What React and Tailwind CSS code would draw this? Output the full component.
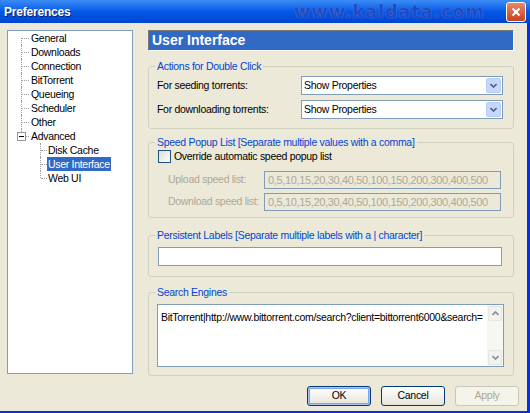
import React from 'react';

const font = { fontFamily: '"Liberation Sans", Arial, sans-serif' };
// Tahoma 8pt is narrower than Arial, so squeeze a little
const T = 'text-[10.5px] tracking-[-0.3px]';

const treeItems = [
  { label: 'General', depth: 0 },
  { label: 'Downloads', depth: 0 },
  { label: 'Connection', depth: 0 },
  { label: 'BitTorrent', depth: 0 },
  { label: 'Queueing', depth: 0 },
  { label: 'Scheduler', depth: 0 },
  { label: 'Other', depth: 0 },
  { label: 'Advanced', depth: 0, expander: true },
  { label: 'Disk Cache', depth: 1 },
  { label: 'User Interface', depth: 1, selected: true },
  { label: 'Web UI', depth: 1, last: true },
];

const speeds = '0,5,10,15,20,30,40,50,100,150,200,300,400,500';

const Arrow = ({ up }) => (
  <svg width="7" height="5" viewBox="0 0 7 5">
    <path d={up ? 'M0.5 4 L3.5 1 L6.5 4' : 'M0.5 1 L3.5 4 L6.5 1'} fill="none" stroke="#4D6185" strokeWidth="1.6" />
  </svg>
);

const Group = ({ title, className, children }) => (
  <div className={`relative rounded-[3px] border border-[#D0D0BF] ${className}`}>
    <span className={`absolute -top-[8px] left-[6px] whitespace-nowrap bg-[#ECE9D8] px-[2px] leading-[14px] text-[#0046D5] ${T}`}>{title}</span>
    {children}
  </div>
);

const Combo = () => (
  <div className="flex h-[19px] w-[202px] items-center border border-[#7F9DB9] bg-white pl-[2px]">
    <span className={`flex-1 text-black ${T}`}>Show Properties</span>
    <div className="mr-[1px] flex h-[15px] w-[15px] items-center justify-center rounded-[2px] border border-[#B9CDF9] bg-[#C7D6FA]">
      <Arrow />
    </div>
  </div>
);

const Button = ({ children, focus, disabled }) => (
  <div
    className={`flex h-[20px] w-[64px] items-center justify-center rounded-[3px] border ${T} ${
      disabled
        ? 'border-[#C9C7BA] bg-[#F5F4EA] text-[#ACA899]'
        : 'border-[#003C74] bg-linear-to-b from-white to-[#E6E4DA] text-black'
    } ${focus ? 'shadow-[inset_0_0_0_1px_#A8C4F0,inset_0_0_0_2px_#7FA2E3]' : ''}`}
  >
    {children}
  </div>
);

export default function App() {
  return (
    <div className="h-[413px] w-[530px] overflow-hidden bg-[#0831D9]" style={font}>
      {/* title bar */}
      <div className="flex h-[23px] items-center bg-linear-to-b from-[#3B8CF5] via-[#0558E6] to-[#0045D0] pl-[4px] pr-[4px]">
        <span className="w-[290px] text-[12px] font-bold tracking-[-0.2px] text-white [text-shadow:1px_1px_#0A1E6E]">Preferences</span>
        <span className="text-[18px] font-bold tracking-[0.7px] text-[#1E4BC2] [text-shadow:0_0_1px_#6A94EE]" style={{ fontFamily: '"DejaVu Sans", Verdana, sans-serif' }}>
          www.kaldata.com
        </span>
        <div className="ml-auto flex h-[20px] w-[20px] items-center justify-center rounded-[3px] border border-white bg-linear-to-b from-[#E8876A] to-[#C6401B]">
          <svg width="10" height="10" viewBox="0 0 10 10">
            <path d="M1.5 1.5 L8.5 8.5 M8.5 1.5 L1.5 8.5" stroke="white" strokeWidth="2" />
          </svg>
        </div>
      </div>

      {/* body */}
      <div className="mr-[3px] flex h-[388px] flex-col bg-[#ECE9D8]">
        <div className="flex pt-[7px]">
          {/* tree */}
          <div className="ml-[7px] h-[344px] w-[126px] border border-[#7F9DB9] bg-white">
            {treeItems.map((it, i) => (
              <div key={it.label} className="relative flex h-[14px] items-center">
                {it.depth === 0 ? (
                  <>
                    <div className={`absolute left-[13px] w-0 border-l border-dotted border-[#A0A0A0] ${i === 0 ? 'top-[7px] h-[7px]' : i === 7 ? 'top-0 h-[7px]' : 'top-0 h-[14px]'}`} />
                    <div className="absolute left-[14px] top-[7px] w-[7px] border-t border-dotted border-[#A0A0A0]" />
                    {it.expander && (
                      <div className="absolute left-[9px] top-[3px] flex h-[9px] w-[9px] items-center justify-center border border-[#919B9C] bg-white">
                        <div className="h-px w-[5px] bg-black" />
                      </div>
                    )}
                    <span className={`ml-[22px] px-[1px] leading-[14px] text-black ${T}`}>{it.label}</span>
                  </>
                ) : (
                  <>
                    <div className={`absolute left-[32px] w-0 border-l border-dotted border-[#A0A0A0] ${it.last ? 'top-0 h-[7px]' : 'top-0 h-[14px]'}`} />
                    <div className="absolute left-[33px] top-[7px] w-[6px] border-t border-dotted border-[#A0A0A0]" />
                    <span className={`ml-[39px] px-[1px] leading-[14px] ${T} ${it.selected ? 'bg-[#316AC5] text-white' : 'text-black'}`}>{it.label}</span>
                  </>
                )}
              </div>
            ))}
          </div>

          {/* right side */}
          <div className="ml-[15px] flex w-[366px] flex-col">
            <div className="flex h-[21px] items-center border-t border-l border-t-[#7A7A74] border-l-[#7A7A74] border-b border-r border-b-white border-r-white bg-[#316AC5] pl-[3px]">
              <span className="text-[14px] font-bold text-white">User Interface</span>
            </div>

            <Group title="Actions for Double Click" className="mt-[15px] h-[63px]">
              <div className="flex flex-col gap-[5px] pt-[9px] pl-[8px]">
                <div className="flex items-center">
                  <span className={`w-[144px] whitespace-nowrap text-black ${T}`}>For seeding torrents:</span>
                  <Combo />
                </div>
                <div className="flex items-center">
                  <span className={`w-[144px] whitespace-nowrap text-black ${T}`}>For downloading torrents:</span>
                  <Combo />
                </div>
              </div>
            </Group>

            <Group title="Speed Popup List [Separate multiple values with a comma]" className="mt-[13px] h-[76px]">
              <div className="pt-[6px] pl-[9px]">
                <div className="flex items-center">
                  <div className="h-[13px] w-[13px] border border-[#1C5180] bg-linear-to-br from-[#DCDCD7] to-white" />
                  <span className={`ml-[3px] text-black ${T}`}>Override automatic speed popup list</span>
                </div>
                <div className="mt-[6px] flex items-center pl-[10px]">
                  <span className={`w-[96px] whitespace-nowrap text-[#ACA899] ${T}`}>Upload speed list:</span>
                  <div className="flex h-[18px] w-[237px] items-center overflow-hidden whitespace-nowrap border border-[#7F9DB9] bg-[#ECE9D8] pl-[3px] text-[11px] tracking-[-0.35px] text-[#ACA899]">{speeds}</div>
                </div>
                <div className="mt-[4px] flex items-center pl-[10px]">
                  <span className={`w-[96px] whitespace-nowrap text-[#ACA899] ${T}`}>Download speed list:</span>
                  <div className="flex h-[18px] w-[237px] items-center overflow-hidden whitespace-nowrap border border-[#7F9DB9] bg-[#ECE9D8] pl-[3px] text-[11px] tracking-[-0.35px] text-[#ACA899]">{speeds}</div>
                </div>
              </div>
            </Group>

            <Group title="Persistent Labels [Separate multiple labels with a | character]" className="mt-[17px] h-[42px]">
              <div className="pt-[11px] pl-[9px]">
                <div className="h-[19px] w-[344px] border border-[#7F9DB9] bg-white" />
              </div>
            </Group>

            <Group title="Search Engines" className="mt-[15px] h-[84px]">
              <div className="pt-[11px] pl-[8px]">
                <div className="flex h-[63px] w-[347px] border border-[#7F9DB9] bg-white">
                  <div className={`flex-1 overflow-hidden whitespace-nowrap pl-[3px] pt-[5px] text-black ${T}`}>
                    BitTorrent|http://www.bittorrent.com/search?client=bittorrent6000&amp;search=
                  </div>
                  <div className="flex w-[16px] flex-col justify-between bg-[#F6F6F3] p-[1px]">
                    <div className="flex h-[15px] items-center justify-center rounded-[2px] border border-[#E0E0DA] bg-[#F2F1EB] opacity-70">
                      <Arrow up />
                    </div>
                    <div className="flex h-[15px] items-center justify-center rounded-[2px] border border-[#E0E0DA] bg-[#F2F1EB] opacity-70">
                      <Arrow />
                    </div>
                  </div>
                </div>
              </div>
            </Group>
          </div>
        </div>

        {/* buttons */}
        <div className="mt-[10px] flex gap-[10px] pl-[307px]">
          <Button focus>OK</Button>
          <Button>Cancel</Button>
          <Button disabled>Apply</Button>
        </div>
      </div>
    </div>
  );
}
